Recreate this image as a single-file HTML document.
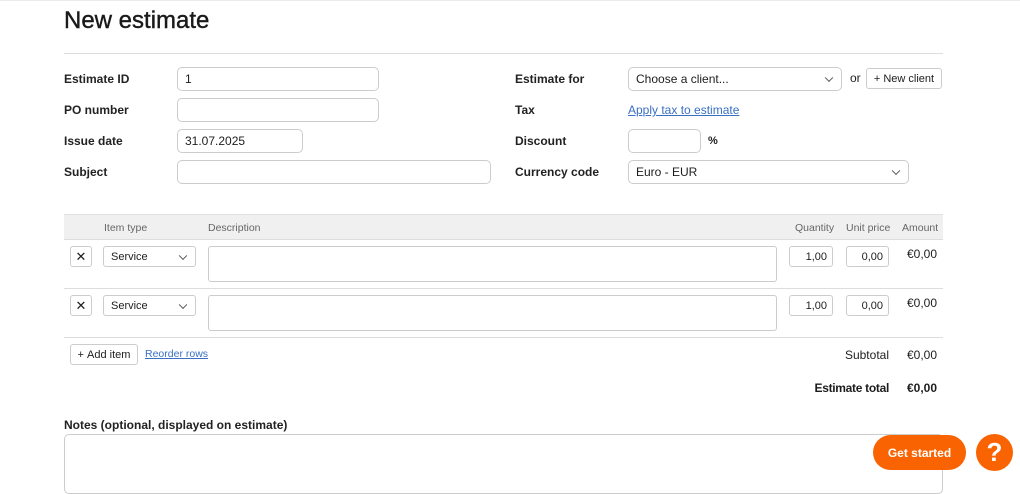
<!DOCTYPE html>
<html><head><meta charset="utf-8"><style>
*{box-sizing:border-box;margin:0;padding:0}
body{width:1020px;height:480px;overflow:hidden;background:#fff;font-family:"Liberation Sans",sans-serif;color:#1d1d1d;position:relative}
.a{position:absolute}
.lbl{font-size:12px;font-weight:bold;color:#222}
.in{position:absolute;border:1px solid #ccc;border-radius:5px;background:#fff;font-size:12px;padding-left:7px;display:flex;align-items:center}
.chev{position:absolute;right:9px;top:50%;width:6px;height:6px;border-right:1.2px solid #555;border-bottom:1.2px solid #555;transform:translateY(-70%) rotate(45deg)}
.btn{position:absolute;border:1px solid #ccc;border-radius:3px;background:#fff;font-size:11px;display:flex;align-items:center;justify-content:center}
.th{position:absolute;top:222px;font-size:10.5px;color:#666}
</style></head><body>
<div class="a" style="left:0;top:0;width:1020px;height:1px;background:#ebebeb"></div>
<div class="a" style="left:64px;top:7px;font-size:24px;font-weight:500;color:#1a1a1a;-webkit-text-stroke:0.4px #1a1a1a">New estimate</div>
<div class="a" style="left:64px;top:53px;width:879px;height:1px;background:#ddd"></div>

<div class="a lbl" style="left:64px;top:72px">Estimate ID</div>
<div class="a lbl" style="left:64px;top:103px">PO number</div>
<div class="a lbl" style="left:64px;top:134px">Issue date</div>
<div class="a lbl" style="left:64px;top:165px">Subject</div>
<div class="in" style="left:177px;top:67px;width:202px;height:24px">1</div>
<div class="in" style="left:177px;top:98px;width:202px;height:24px"></div>
<div class="in" style="left:177px;top:129px;width:126px;height:24px">31.07.2025</div>
<div class="in" style="left:177px;top:160px;width:314px;height:24px"></div>

<div class="a lbl" style="left:515px;top:72px">Estimate for</div>
<div class="a lbl" style="left:515px;top:103px">Tax</div>
<div class="a lbl" style="left:515px;top:134px">Discount</div>
<div class="a lbl" style="left:515px;top:165px">Currency code</div>
<div class="in" style="left:628px;top:67px;width:214px;height:24px">Choose a client...<span class="chev"></span></div>
<div class="a" style="left:850px;top:71px;font-size:12px">or</div>
<div class="btn" style="left:866px;top:68px;width:76px;height:21px">+&nbsp;New client</div>
<div class="a" style="left:628px;top:103px;font-size:12px;color:#3a6fc4;text-decoration:underline">Apply tax to estimate</div>
<div class="in" style="left:628px;top:129px;width:73px;height:24px"></div>
<div class="a" style="left:708px;top:135px;font-size:11px;font-weight:bold">%</div>
<div class="in" style="left:628px;top:160px;width:281px;height:24px">Euro - EUR<span class="chev"></span></div>

<div class="a" style="left:64px;top:214px;width:879px;height:26px;background:#f0f0f0;border-top:1px solid #e2e2e2;border-bottom:1px solid #ddd"></div>
<div class="th" style="left:104px">Item type</div>
<div class="th" style="left:208px">Description</div>
<div class="th" style="left:795px">Quantity</div>
<div class="th" style="left:846px">Unit price</div>
<div class="th" style="left:902px">Amount</div>

<div class="btn" style="left:70px;top:246px;width:22px;height:21px;font-size:13px">✕</div>
<div class="in" style="left:103px;top:246px;width:93px;height:21px;font-size:11px;border-radius:3px">Service<span class="chev"></span></div>
<div class="in" style="left:208px;top:246px;width:569px;height:36px;border-radius:3px"></div>
<div class="in" style="left:789px;top:246px;width:44px;height:21px;font-size:11px;border-radius:3px;justify-content:flex-end;padding-right:5px">1,00</div>
<div class="in" style="left:846px;top:246px;width:43px;height:21px;font-size:11px;border-radius:3px;justify-content:flex-end;padding-right:5px">0,00</div>
<div class="a" style="left:900px;top:247px;width:37px;font-size:12px;text-align:right">€0,00</div>
<div class="a" style="left:64px;top:288px;width:879px;height:1px;background:#ddd"></div>

<div class="btn" style="left:70px;top:295px;width:22px;height:21px;font-size:13px">✕</div>
<div class="in" style="left:103px;top:295px;width:93px;height:21px;font-size:11px;border-radius:3px">Service<span class="chev"></span></div>
<div class="in" style="left:208px;top:295px;width:569px;height:36px;border-radius:3px"></div>
<div class="in" style="left:789px;top:295px;width:44px;height:21px;font-size:11px;border-radius:3px;justify-content:flex-end;padding-right:5px">1,00</div>
<div class="in" style="left:846px;top:295px;width:43px;height:21px;font-size:11px;border-radius:3px;justify-content:flex-end;padding-right:5px">0,00</div>
<div class="a" style="left:900px;top:296px;width:37px;font-size:12px;text-align:right">€0,00</div>
<div class="a" style="left:64px;top:337px;width:879px;height:1px;background:#ddd"></div>

<div class="btn" style="left:70px;top:344px;width:68px;height:21px">+&nbsp;Add item</div>
<div class="a" style="left:145px;top:348px;font-size:10.5px;color:#3a6fc4;text-decoration:underline">Reorder rows</div>
<div class="a" style="left:800px;top:348px;width:89px;font-size:12px;text-align:right">Subtotal</div>
<div class="a" style="left:895px;top:348px;width:42px;font-size:12px;text-align:right">€0,00</div>
<div class="a" style="left:780px;top:381px;width:109px;font-size:12px;font-weight:bold;text-align:right;letter-spacing:-0.3px">Estimate total</div>
<div class="a" style="left:895px;top:381px;width:42px;font-size:12px;font-weight:bold;text-align:right">€0,00</div>

<div class="a lbl" style="left:64px;top:418px">Notes (optional, displayed on estimate)</div>
<div class="a" style="left:64px;top:434px;width:879px;height:60px;border:1px solid #ccc;border-radius:5px"></div>

<div class="a" style="left:873px;top:435px;width:93px;height:35px;border-radius:18px;background:#f96302;color:#fff;font-size:12px;font-weight:bold;display:flex;align-items:center;justify-content:center">Get started</div>
<div class="a" style="left:976px;top:434px;width:37px;height:37px;border-radius:50%;background:#f96302;color:#fff;font-size:26px;font-weight:bold;display:flex;align-items:center;justify-content:center">?</div>
</body></html>
